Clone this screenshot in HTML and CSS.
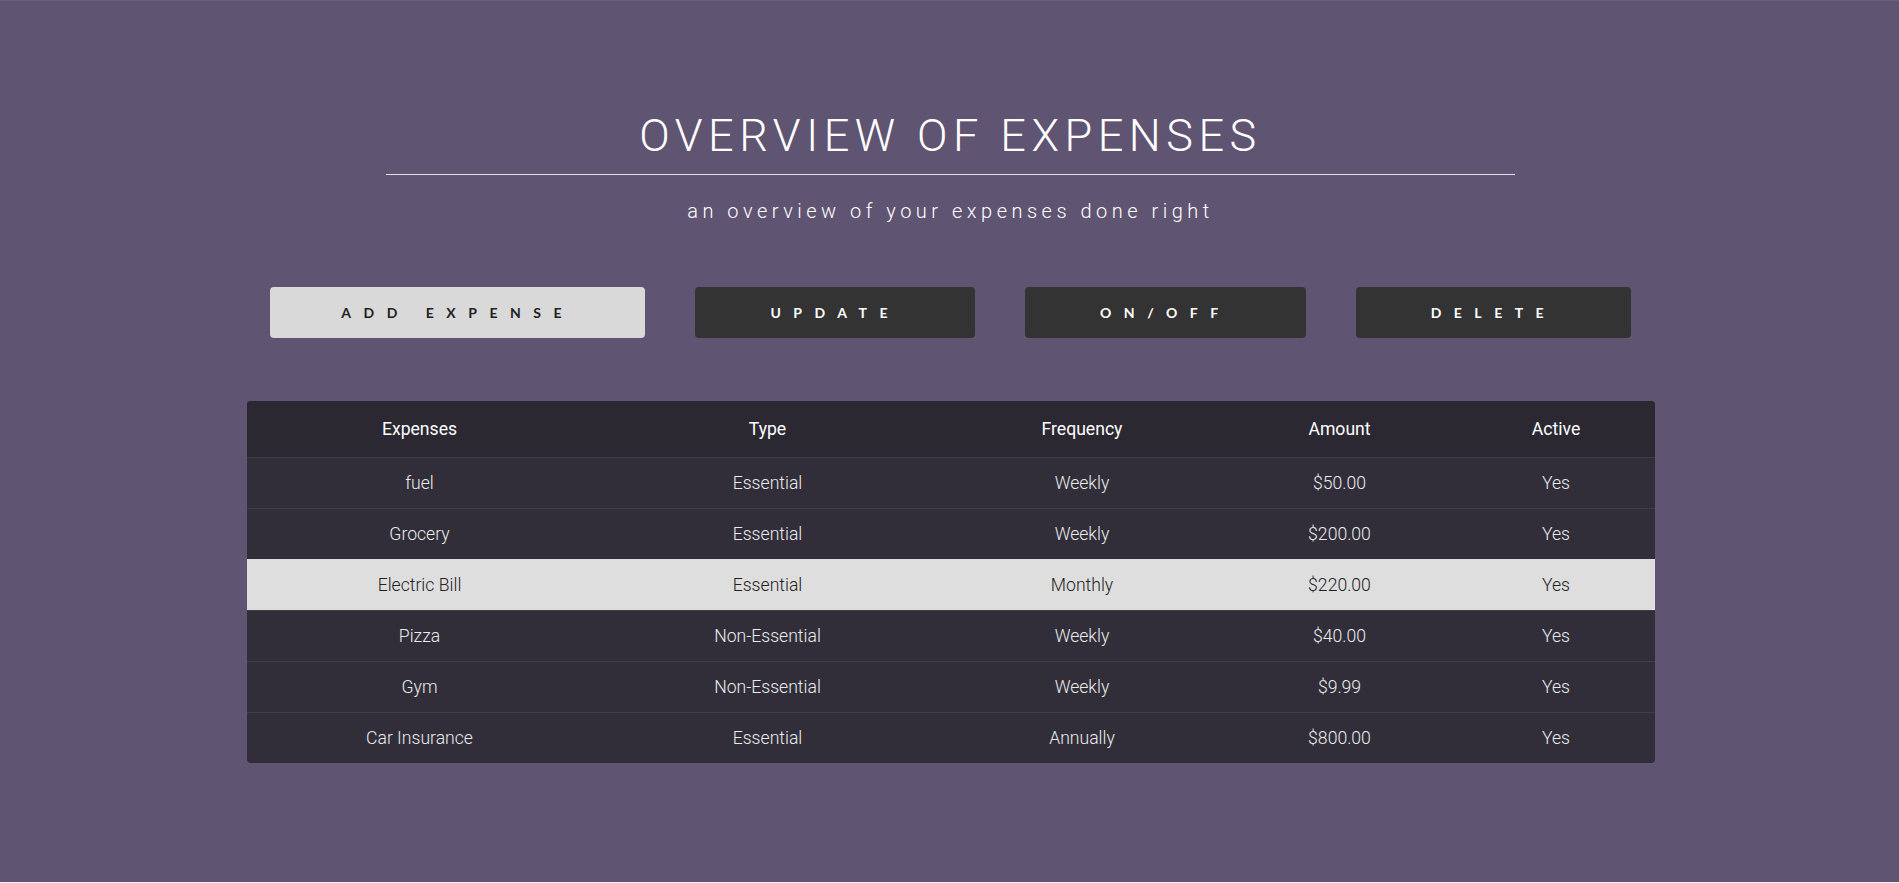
FILE: index.html
```html
<!DOCTYPE html>
<html lang="en">
<head>
<meta charset="utf-8">
<title>Overview of Expenses</title>
<link rel="stylesheet" href="styles.css">
</head>
<body>
<div class="page">
  <header class="hero">
    <h1 class="title">OVERVIEW OF EXPENSES</h1>
    <hr class="rule">
    <p class="subtitle">an overview of your expenses done right</p>
  </header>

  <nav class="actions">
    <button class="btn btn-light">ADD EXPENSE</button>
    <button class="btn">UPDATE</button>
    <button class="btn">ON/OFF</button>
    <button class="btn">DELETE</button>
  </nav>

  <table class="expenses">
    <colgroup>
      <col class="c1"><col class="c2"><col class="c3"><col class="c4"><col class="c5">
    </colgroup>
    <thead>
      <tr><th>Expenses</th><th>Type</th><th>Frequency</th><th>Amount</th><th>Active</th></tr>
    </thead>
    <tbody>
      <tr><td>fuel</td><td>Essential</td><td>Weekly</td><td>$50.00</td><td>Yes</td></tr>
      <tr><td>Grocery</td><td>Essential</td><td>Weekly</td><td>$200.00</td><td>Yes</td></tr>
      <tr class="selected"><td>Electric Bill</td><td>Essential</td><td>Monthly</td><td>$220.00</td><td>Yes</td></tr>
      <tr><td>Pizza</td><td>Non-Essential</td><td>Weekly</td><td>$40.00</td><td>Yes</td></tr>
      <tr><td>Gym</td><td>Non-Essential</td><td>Weekly</td><td>$9.99</td><td>Yes</td></tr>
      <tr><td>Car Insurance</td><td>Essential</td><td>Annually</td><td>$800.00</td><td>Yes</td></tr>
    </tbody>
  </table>
</div>
</body>
</html>
```

FILE: styles.css
```css
html {
  margin: 0;
  padding: 0;
  background: #f2f2f2;
}

body {
  margin: 0;
  padding: 0;
  background: #5f5472;
  font-family: Roboto, "Liberation Sans", sans-serif;
  color: #fff;
  min-height: 881px;
  border-top: 1px solid #6a617c;
}

.page {
  padding: 108px 8px 0 10px;
}

.hero {
  text-align: center;
}

.title {
  margin: 0;
  font-size: 45px;
  line-height: 54px;
  font-weight: 300;
  letter-spacing: 5.5px;
  color: #fff;
}

.rule {
  width: 1129px;
  margin: 11px auto 0;
  border: 0;
  border-top: 1px solid #e4e2e8;
  height: 0;
}

.subtitle {
  margin: 24px 0 0;
  font-size: 20px;
  line-height: 24px;
  font-weight: 300;
  letter-spacing: 4.5px;
  color: #fff;
}

.actions {
  display: flex;
  justify-content: center;
  gap: 50px;
  margin-top: 64px;
}

.btn {
  font-family: Lato, "Liberation Sans", sans-serif;
  font-weight: 700;
  font-size: 14px;
  line-height: 17px;
  letter-spacing: 12.5px;
  padding: 17px 75px;
  border: 0;
  border-radius: 4px;
  background: #333333;
  color: #fff;
}

.btn-light {
  padding: 17px 71.5px;
  background: #d9d9d9;
  color: #222;
}

.expenses {
  width: 1408px;
  margin: 63px auto 0;
  border-collapse: separate;
  border-spacing: 0;
  border-radius: 4px;
  overflow: hidden;
  table-layout: fixed;
  background: #312e3a;
}

.c1 { width: 346px; }
.c2 { width: 350px; }
.c3 { width: 279px; }
.c4 { width: 236px; }
.c5 { width: 197px; }

.expenses th {
  height: 56px;
  padding: 0;
  background: #2b2832;
  color: #fff;
  font-size: 1.1rem;
  font-weight: 400;
  text-align: center;
}

.expenses td {
  height: 50px;
  padding: 0;
  border-top: 1px solid #403c48;
  color: #ebebeb;
  font-size: 1.1rem;
  font-weight: 300;
  text-align: center;
}

.expenses tr.selected td {
  background: #dedede;
  color: #222;
  border-top-color: #dedede;
}
```
